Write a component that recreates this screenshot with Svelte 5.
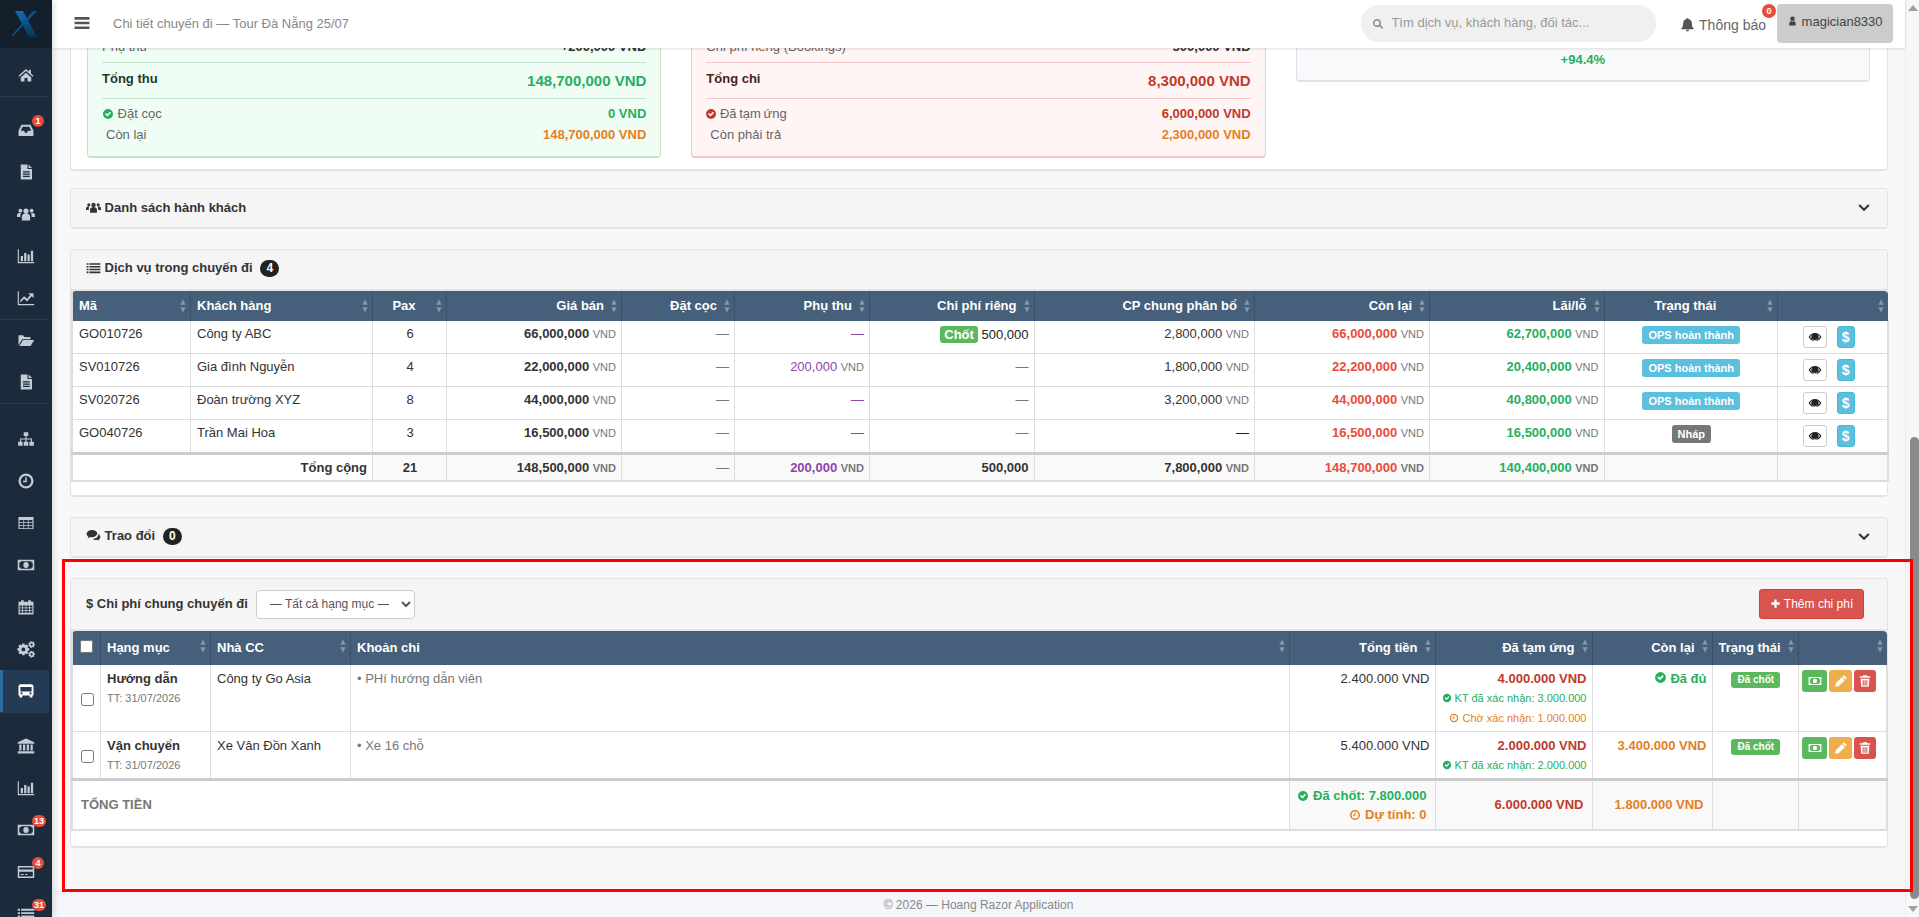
<script>
  function gear(cx, cy, r1, r2, hole, n) {
    let d = "";
    const step = (Math.PI * 2) / n;
    for (let i = 0; i < n; i++) {
      const a = i * step;
      const pts = [
        [r2, a - step * 0.5],
        [r1, a - step * 0.22],
        [r1, a + step * 0.22],
        [r2, a + step * 0.5],
      ];
      for (const [r, t] of pts) {
        d += (d ? "L" : "M") + (cx + r * Math.cos(t)).toFixed(2) + " " + (cy + r * Math.sin(t)).toFixed(2);
      }
    }
    d += `z M${cx - hole} ${cy}a${hole} ${hole} 0 1 0 ${hole * 2} 0a${hole} ${hole} 0 1 0 ${-hole * 2} 0z`;
    return d;
  }

  const grid = (x, y, w, h, cols, rows, gap) => {
    let d = "";
    for (let r = 0; r < rows; r++) {
      for (let c = 0; c < cols; c++) {
        d += `M${x + c * (w + gap)} ${y + r * (h + gap)}h${w}v${h}h${-w}z`;
      }
    }
    return d;
  };

  const icons = {
    home: "M12 4 2 13l1.2 1.4L12 6.6l8.8 7.8L22 13l-3.5-3.1V5h-2.6v2.6z M5 15.2 12 9l7 6.2v5.3h-5V16h-4v4.5H5z",
    inbox: "M6 5h12l4 8v6a1 1 0 0 1-1 1H3a1 1 0 0 1-1-1v-6z M7.5 7.5 5 13h4.5l1 2.5h3l1-2.5H19l-2.5-5.5z",
    file: "M5 2h9v6h6v14H5z M15.5 2 20 6.5h-4.5z M8 11h9v1.5H8z M8 14h9v1.5H8z M8 17h9v1.5H8z",
    users:
      "M8.5 8a3.5 3.5 0 1 0 7 0a3.5 3.5 0 1 0-7 0z M6.5 20.5v-5c0-2.5 2-4 3.5-4h4c1.5 0 3.5 1.5 3.5 4v5z M2 7.5a2.5 2.5 0 1 0 5 0a2.5 2.5 0 1 0-5 0z M17 7.5a2.5 2.5 0 1 0 5 0a2.5 2.5 0 1 0-5 0z M0 16v-2c0-2 1-3.5 3-3.5h2.5c-.8 1-1 2-1 4V16z M24 16v-2c0-2-1-3.5-3-3.5h-2.5c.8 1 1 2 1 4V16z",
    bar: "M1 3h1.5v17H23v1.5H1z M5 12h3v7H5z M9.5 8h3v11h-3z M14 10h3v9h-3z M18.5 5h3v14h-3z",
    line: "M1 3h1.5v17H23v1.5H1z M4.5 18v-3.5l5-5 4 3.5 4-5-2.5-2.5H22v6.5l-2.5-2.5-6 7-4-3.5z",
    folder: "M2 19V5.5h6l2 2.5h8v3H7z M8 12h15l-5 8H3z",
    sitemap:
      "M9 3h6v5h-2.25v3.25H20v4.25h2.5v5.5h-6v-5.5h2v-2.75h-5.75v2.75H15v5.5H9v-5.5h2.25v-2.75H5.5v2.75h2v5.5h-6v-5.5H4v-4.25h7.25V8H9z",
    clock: "M12 2a10 10 0 1 0 0 20a10 10 0 1 0 0-20z M12 5a7 7 0 1 1 0 14a7 7 0 1 1 0-14z M11 7h2v6.5H8v-2h3z",
    table: "M2 4h20v16H2z" + grid(3.5, 8, 5, 3, 3, 3, 1),
    money:
      "M1 5h22v14H1z M5 7a2 2 0 0 1-2 2v6a2 2 0 0 1 2 2h14a2 2 0 0 1 2-2V9a2 2 0 0 1-2-2z M12 8a3.6 4 0 1 0 0 8a3.6 4 0 1 0 0-8z",
    calendar: "M2 5h3.5V3H9v2h6V3h3.5v2H22v17H2z" + grid(3.5, 10, 3.5, 2.5, 4, 3, 1),
    cogs: gear(8.5, 12.5, 8, 6, 2.6, 8) + " " + gear(19.5, 6, 4.5, 3.3, 1.5, 7) + " " + gear(19.5, 19, 4.5, 3.3, 1.5, 7),
    bus: "M5 3h14a3 3 0 0 1 3 3v12h-1.5v2.5h-3.5V18H7v2.5H3.5V18H2V6a3 3 0 0 1 3-3z M4.5 6.5v6h15v-6z M4.5 15a1.5 1.5 0 1 0 3 0a1.5 1.5 0 1 0-3 0z M16.5 15a1.5 1.5 0 1 0 3 0a1.5 1.5 0 1 0-3 0z",
    bank: "M12 2 23 7v2H1V7z M3 10h3v8H3z M8 10h3v8H8z M13 10h3v8h-3z M18 10h3v8h-3z M1 19h22v3H1z",
    card: "M1 4h22v16H1z M3 6h18v2.5H3z M3 11.5h18V18H3z M5 14.5h4V16H5z M11 14.5h3V16h-3z",
    list: "M1 5h3v2.5H1z M5.5 5H23v2.5H5.5z M1 9.5h3V12H1z M5.5 9.5H23V12H5.5z M1 14h3v2.5H1z M5.5 14H23v2.5H5.5z M1 18.5h3V21H1z M5.5 18.5H23V21H5.5z",
    bars: "M2 4h20v3.5H2z M2 10.2h20v3.5H2z M2 16.5h20V20H2z",
    search: "M10 2a8 8 0 1 0 4.9 14.3l5.3 5.3 2.2-2.2-5.3-5.3A8 8 0 0 0 10 2z M10 5a5 5 0 1 1 0 10a5 5 0 1 1 0-10z",
    bell: "M12 1.5a1.5 1.5 0 0 0-1.5 1.6C7 3.8 5 6.5 5 10c0 5-1 6.5-3 8.5v1h20v-1c-2-2-3-3.5-3-8.5 0-3.5-2-6.2-5.5-6.9A1.5 1.5 0 0 0 12 1.5z M9.5 20.5a2.5 2.5 0 0 0 5 0z",
    user: "M12 2a5 5 0 1 0 0 10a5 5 0 1 0 0-10z M5 22v-4c0-3 2-5.5 4-6 1 1 2 1.5 3 1.5s2-.5 3-1.5c2 .5 4 3 4 6v4z",
    check: "M12 2a10 10 0 1 0 0 20a10 10 0 1 0 0-20z M6 12.2l2.2-2.2 2.6 2.6 5-5 2.2 2.2-7.2 7.2z",
    comments:
      "M9.5 3C4.8 3 1 5.8 1 9.2c0 2 1.2 3.7 3 4.8-.3 1-1 1.9-1.5 2.5 1.8-.2 3.4-1 4.5-2 .8.2 1.6.3 2.5.3 4.7 0 8.5-2.8 8.5-6.3S14.2 3 9.5 3z M20 9c.1 5-4 8-9.5 8 1.2 1.3 3.2 2 5.5 2 .7 0 1.3-.1 2-.2.9.8 2 1.3 3.5 1.5-.4-.5-.9-1.1-1.2-2 1.7-.9 2.7-2.3 2.7-3.8 0-2-1.1-3.7-3-5.5z",
    chevron: "M2.5 8 5 5.5l7 7 7-7L21.5 8 12 17.5z",
    eye: "M12 5C7 5 3 8 1 12c2 4 6 7 11 7s9-3 11-7c-2-4-6-7-11-7z M3.5 12c1.2-2 2.8-3.5 4.6-4.4a6 6 0 1 0 7.8 0c1.8.9 3.4 2.4 4.6 4.4-2 3-5 5-8.500 5s-6.500-2-8.500-5z",
    plus: "M9.5 3h5v6.500H21v5h-6.500V21h-5v-6.500H3v-5h6.500z",
    pencil: "M17 2l5 5-2.500 2.500-5-5z M13.500 5.500l5 5L8 21l-6 1 1-6z",
    trash: "M9 2h6l1 2h5v2.500H3V4h5z M4.500 8h15l-1 14h-13z M8 10.500V20h1.800v-9.500z M11.100 10.500V20h1.800v-9.500z M14.200 10.500V20H16v-9.500z",
    sort: "M12 1 20 10H4z M12 23 4 14H20z",
  };

  const navGroups = [
    { pad: 0, items: [{ i: "home" }] },
    {
      pad: 13,
      items: [{ i: "inbox", badge: "1" }, { i: "file" }, { i: "users" }, { i: "bar" }, { i: "line" }],
    },
    { pad: 0, items: [{ i: "folder" }, { i: "file" }] },
    {
      pad: 15,
      items: [
        { i: "sitemap" },
        { i: "clock" },
        { i: "table" },
        { i: "money" },
        { i: "calendar" },
        { i: "cogs" },
        { i: "bus", active: true },
      ],
    },
    {
      pad: 13,
      items: [
        { i: "bank" },
        { i: "bar" },
        { i: "money", badge: "13" },
        { i: "card", badge: "4" },
        { i: "list", badge: "31" },
      ],
    },
  ];

  const services = [
    { ma: "GO010726", kh: "Công ty ABC", pax: 6, gia: "66,000,000", phu: null, rieng: "500,000", chot: true, cp: "2,800,000", con: "66,000,000", lai: "62,700,000", tt: "OPS hoàn thành" },
    { ma: "SV010726", kh: "Gia đình Nguyễn", pax: 4, gia: "22,000,000", phu: "200,000", rieng: null, cp: "1,800,000", con: "22,200,000", lai: "20,400,000", tt: "OPS hoàn thành" },
    { ma: "SV020726", kh: "Đoàn trường XYZ", pax: 8, gia: "44,000,000", phu: null, rieng: null, cp: "3,200,000", con: "44,000,000", lai: "40,800,000", tt: "OPS hoàn thành" },
    { ma: "GO040726", kh: "Trần Mai Hoa", pax: 3, gia: "16,500,000", phu: null, rieng: null, cp: null, con: "16,500,000", lai: "16,500,000", tt: "Nháp" },
  ];

  const serviceCols = [
    ["Mã", "l", 118.5],
    ["Khách hàng", "l", 182],
    ["Pax", "c", 74],
    ["Giá bán", "r", 175],
    ["Đặt cọc", "r", 113],
    ["Phụ thu", "r", 135],
    ["Chi phí riêng", "r", 164.5],
    ["CP chung phân bổ", "r", 220.5],
    ["Còn lại", "r", 175],
    ["Lãi/lỗ", "r", 174.5],
    ["Trạng thái", "c", 173.5],
    ["", "c", 110],
  ];

  const costCols = [
    ["Hạng mục", "l", 110],
    ["Nhà CC", "l", 140],
    ["Khoản chi", "l", 939],
    ["Tổng tiền", "r", 145.5],
    ["Đã tạm ứng", "r", 157],
    ["Còn lại", "r", 120],
    ["Trạng thái", "l", 86.5],
    ["", "c", 88.5],
  ];
</script>

{#snippet icon(name, cls = "")}
  <svg class="ic {cls}" viewBox="0 0 24 24" aria-hidden="true"><path fill-rule="evenodd" d={icons[name]} /></svg>
{/snippet}

{#snippet sortable(col)}
  <th class={col[1]}>
    {col[0]}
    <svg class="sort" viewBox="0 0 24 24" preserveAspectRatio="none" aria-hidden="true"><path d={icons.sort} /></svg>
  </th>
{/snippet}

{#snippet amount(value, cls = "")}
  <span class={cls}>{value}</span> <small>VND</small>
{/snippet}

<div class="shell">
  <aside class="sidebar">
    <div class="logo">
      <svg viewBox="0 0 52 48" width="52" height="48" aria-hidden="true">
        <defs>
          <linearGradient id="xg" x1="0" y1="0" x2="0" y2="1">
            <stop offset="0" stop-color="#0f6fb5" />
            <stop offset="1" stop-color="#0a3350" />
          </linearGradient>
        </defs>
        <polygon points="15,11 23,11 37,37 29,37" fill="url(#xg)" />
        <polygon points="37,11 33,11 12,35 13,36" fill="#0c5488" />
      </svg>
    </div>
    <nav>
      {#each navGroups as group}
        <div class="group" style="padding-top:{group.pad}px">
          {#each group.items as item}
            <div class="nav-item" class:active={item.active}>
              {@render icon(item.i, "nav-ic")}
              {#if item.badge}<span class="nav-badge">{item.badge}</span>{/if}
            </div>
          {/each}
        </div>
      {/each}
    </nav>
  </aside>

  <div class="main">
    <header>
      <span class="burger">{@render icon("bars")}</span>
      <span class="page-title">Chi tiết chuyến đi — Tour Đà Nẵng 25/07</span>
      <label class="search">
        {@render icon("search")}
        <input placeholder="Tìm dịch vụ, khách hàng, đối tác..." />
      </label>
      <span class="notif">
        {@render icon("bell")}
        Thông báo
        <span class="notif-badge">0</span>
      </span>
      <span class="user">{@render icon("user")} magician8330</span>
    </header>

    <div class="viewport">
      <div class="content">
        <section class="panel summary">
          <div class="cards">
            <div class="card green">
              <div class="row clip"><span>Phụ thu</span><b class="dark">+200,000 VND</b></div>
              <div class="row total"><b class="ttl">Tổng thu</b><b class="big g">148,700,000 VND</b></div>
              <div class="row"><span>{@render icon("check", "g")} Đặt cọc</span><b class="g">0 VND</b></div>
              <div class="row"><span class="ind">Còn lại</span><b class="o">148,700,000 VND</b></div>
            </div>
            <div class="card red">
              <div class="row clip"><span>Chi phí riêng (Bookings)</span><b class="dark">500,000 VND</b></div>
              <div class="row total"><b class="ttl">Tổng chi</b><b class="big r">8,300,000 VND</b></div>
              <div class="row"><span class="tight">{@render icon("check", "r")} Đã tạm ứng</span><b class="r">6,000,000 VND</b></div>
              <div class="row"><span class="ind">Còn phải trả</span><b class="o">2,300,000 VND</b></div>
            </div>
            <div class="card grey"><b class="g">+94.4%</b></div>
          </div>
        </section>

        <section class="panel collapsed">
          <div class="head">
            <h3>{@render icon("users")} Danh sách hành khách</h3>
            {@render icon("chevron", "chev")}
          </div>
        </section>

        <section class="panel svc">
          <div class="head">
            <h3>{@render icon("list")} Dịch vụ trong chuyến đi <span class="count">4</span></h3>
          </div>
          <table class="services">
            <colgroup>
              {#each serviceCols as c}<col style="width:{c[2]}px" />{/each}
            </colgroup>
            <thead>
              <tr>
                {#each serviceCols as c}{@render sortable(c)}{/each}
              </tr>
            </thead>
            <tbody>
              {#each services as s}
                <tr>
                  <td>{s.ma}</td>
                  <td>{s.kh}</td>
                  <td class="c">{s.pax}</td>
                  <td class="r">{@render amount(s.gia, "num")}</td>
                  <td class="r"><span class="dash">—</span></td>
                  <td class="r">
                    {#if s.phu}{@render amount(s.phu, "p")}{:else}<span class="p">—</span>{/if}
                  </td>
                  <td class="r">
                    {#if s.rieng}<span class="chot">Chốt</span> <span class="dark-n">{s.rieng}</span>{:else}<span class="dash">—</span>{/if}
                  </td>
                  <td class="r">
                    {#if s.cp}{@render amount(s.cp)}{:else}<span class="dark-n">—</span>{/if}
                  </td>
                  <td class="r">{@render amount(s.con, "rd")}</td>
                  <td class="r">{@render amount(s.lai, "g")}</td>
                  <td class="c">
                    <span class="status" class:draft={s.tt === "Nháp"}>{s.tt}</span>
                  </td>
                  <td class="acts">
                    <div class="act-row">
                      <button class="btn eye">{@render icon("eye")}</button>
                      <button class="btn dollar">$</button>
                    </div>
                  </td>
                </tr>
              {/each}
            </tbody>
            <tfoot>
              <tr>
                <td colspan="2" class="r sum-label"><b>Tổng cộng</b></td>
                <td class="c"><b>21</b></td>
                <td class="r">{@render amount("148,500,000", "num")}</td>
                <td class="r"><span class="dash">—</span></td>
                <td class="r">{@render amount("200,000", "p")}</td>
                <td class="r"><span class="num">500,000</span></td>
                <td class="r">{@render amount("7,800,000", "num")}</td>
                <td class="r">{@render amount("148,700,000", "rd")}</td>
                <td class="r">{@render amount("140,400,000", "g")}</td>
                <td></td>
                <td></td>
              </tr>
            </tfoot>
          </table>
        </section>

        <section class="panel collapsed">
          <div class="head">
            <h3>{@render icon("comments")} Trao đổi <span class="count">0</span></h3>
            {@render icon("chevron", "chev")}
          </div>
        </section>

        <section class="panel costs">
          <div class="head tall">
            <h3>$ Chi phí chung chuyến đi</h3>
            <select>
              <option>— Tất cả hạng mục —</option>
            </select>
            <button class="add">{@render icon("plus")} Thêm chi phí</button>
          </div>
          <table class="cost-table">
            <colgroup>
              <col style="width:28.500px" />
              {#each costCols as c}<col style="width:{c[2]}px" />{/each}
            </colgroup>
            <thead>
              <tr>
                <th class="c chk"><input type="checkbox" /></th>
                {#each costCols as c}{@render sortable(c)}{/each}
              </tr>
            </thead>
            <tbody>
              <tr>
                <td class="c mid"><input type="checkbox" /></td>
                <td><b>Hướng dẫn</b><div class="due">TT: 31/07/2026</div></td>
                <td>Công ty Go Asia</td>
                <td class="muted">• PHí hướng dẫn viên</td>
                <td class="r">2.400.000 VND</td>
                <td class="r">
                  <b class="r2">4.000.000 VND</b>
                  <div class="sub g">{@render icon("check")} KT đã xác nhận: 3.000.000</div>
                  <div class="sub o">{@render icon("clock")} Chờ xác nhận: 1.000.000</div>
                </td>
                <td class="r"><b class="g">{@render icon("check")} Đã đủ</b></td>
                <td class="c"><span class="locked">Đã chốt</span></td>
                <td>
                  <div class="tools">
                    <button class="tool t-g">{@render icon("money")}</button>
                    <button class="tool t-o">{@render icon("pencil")}</button>
                    <button class="tool t-r">{@render icon("trash")}</button>
                  </div>
                </td>
              </tr>
              <tr>
                <td class="c mid"><input type="checkbox" /></td>
                <td><b>Vận chuyển</b><div class="due">TT: 31/07/2026</div></td>
                <td>Xe Vân Đồn Xanh</td>
                <td class="muted">• Xe 16 chỗ</td>
                <td class="r">5.400.000 VND</td>
                <td class="r">
                  <b class="r2">2.000.000 VND</b>
                  <div class="sub g">{@render icon("check")} KT đã xác nhận: 2.000.000</div>
                </td>
                <td class="r"><b class="o">3.400.000 VND</b></td>
                <td class="c"><span class="locked">Đã chốt</span></td>
                <td>
                  <div class="tools">
                    <button class="tool t-g">{@render icon("money")}</button>
                    <button class="tool t-o">{@render icon("pencil")}</button>
                    <button class="tool t-r">{@render icon("trash")}</button>
                  </div>
                </td>
              </tr>
            </tbody>
            <tfoot>
              <tr>
                <td colspan="4" class="grand">TỔNG TIỀN</td>
                <td class="r stack">
                  <div class="g">{@render icon("check")} Đã chốt: 7.800.000</div>
                  <div class="o">{@render icon("clock")} Dự tính: 0</div>
                </td>
                <td class="r mid tot"><b class="r2">6.000.000 VND</b></td>
                <td class="r mid tot"><b class="o">1.800.000 VND</b></td>
                <td></td>
                <td></td>
              </tr>
            </tfoot>
          </table>
        </section>
      </div>
      <footer>© 2026 — Hoang Razor Application</footer>
    </div>
  </div>

  <div class="scrollbar">
    <span class="arrow up"></span>
    <div class="track"><div class="thumb"></div></div>
    <span class="arrow down"></span>
  </div>

  <div class="annotation"></div>
</div>

<style>
  :global(body) {
    margin: 0;
    font-family: "Liberation Sans", Arial, sans-serif;
    font-size: 13px;
    color: #333;
    overflow: hidden;
  }
  .shell {
    position: relative;
    display: flex;
    width: 1919px;
    height: 917px;
    overflow: hidden;
    background: #f4f6f9;
  }
  .ic {
    width: 1em;
    height: 1em;
    fill: currentColor;
    vertical-align: -1px;
  }

  /* sidebar */
  .sidebar {
    flex: 0 0 52px;
    background: #1c2b3c;
    z-index: 3;
    overflow: hidden;
    box-shadow: 2px 0 6px rgba(0, 0, 0, 0.12);
  }
  .logo {
    height: 48px;
    background: #141f2c;
  }
  .logo svg {
    display: block;
  }
  nav {
    width: 49px;
    padding-top: 6px;
  }
  .group {
    border-bottom: 1px solid #2a3b4e;
    margin-bottom: -1px;
  }
  .group:last-child {
    border-bottom: 0;
  }
  .nav-item {
    position: relative;
    height: 42px;
    display: flex;
    align-items: center;
    justify-content: center;
    color: #c3cbd3;
    box-sizing: border-box;
    padding-left: 3px;
  }
  .nav-item.active {
    background: #243b55;
    border-left: 3px solid #2e6da4;
    padding-left: 0;
    color: #fff;
  }
  .nav-ic {
    width: 18px;
    height: 18px;
  }
  .nav-badge {
    position: absolute;
    top: 6px;
    left: 32px;
    min-width: 12px;
    height: 12px;
    padding: 0 2px;
    box-sizing: border-box;
    border-radius: 6px;
    background: #e74c3c;
    color: #fff;
    font-size: 9px;
    font-weight: 700;
    line-height: 12px;
    text-align: center;
  }

  /* header */
  .main {
    flex: 0 0 1853px;
    display: flex;
    flex-direction: column;
    min-width: 0;
  }
  header {
    flex: 0 0 48px;
    display: flex;
    align-items: center;
    background: #fff;
    box-shadow: 0 1px 3px rgba(0, 0, 0, 0.12);
    z-index: 2;
    padding-right: 12px;
  }
  .burger {
    margin-left: 21px;
    font-size: 18px;
    color: #555;
    line-height: 1;
  }
  .page-title {
    margin-left: 22px;
    color: #888;
    flex: 1;
    margin-top: -2px;
  }
  .search {
    width: 295px;
    height: 37px;
    margin-top: -1px;
    border-radius: 18px;
    background: #f0f0f0;
    display: flex;
    align-items: center;
    gap: 7px;
    padding-left: 11px;
    box-sizing: border-box;
    color: #888;
    font-size: 12px;
  }
  .search input {
    flex: 1;
    min-width: 0;
    border: 0;
    outline: 0;
    background: transparent;
    font: 13px "Liberation Sans", Arial, sans-serif;
    padding: 0 0 2px;
  }
  .search input::placeholder {
    color: #999;
  }
  .notif {
    position: relative;
    margin-left: 24px;
    margin-right: 11px;
    font-size: 14px;
    color: #666;
    white-space: nowrap;
  }
  .notif .ic {
    width: 15px;
    height: 17px;
    vertical-align: -3px;
    color: #555;
  }
  .notif-badge {
    position: absolute;
    top: -12px;
    right: -10px;
    width: 14px;
    height: 14px;
    border-radius: 50%;
    background: #e74c3c;
    color: #fff;
    font-size: 9px;
    font-weight: 700;
    line-height: 14px;
    text-align: center;
  }
  .user {
    width: 116px;
    height: 39px;
    margin-top: -1px;
    border-radius: 4px;
    background: #ccc;
    color: #444;
    line-height: 36px;
    padding-left: 10px;
    box-sizing: border-box;
    white-space: nowrap;
  }
  .user .ic {
    width: 11px;
    height: 12px;
    vertical-align: -1px;
  }

  /* content */
  .viewport {
    flex: 1;
    display: flex;
    flex-direction: column;
    overflow: hidden;
    background: #f4f6f9;
  }
  .content {
    height: 843px;
    flex: none;
    padding: 0 17px 0 18px;
    background: #f8f8f8;
    display: flex;
    flex-direction: column;
    gap: 20px;
  }
  .panel {
    flex: none;
    background: #fff;
    border: 1px solid #e3e3e3;
    border-bottom-width: 2px;
    border-radius: 4px;
    padding-bottom: 14px;
  }
  .panel.svc {
    padding-bottom: 13px;
  }
  .panel.costs {
    padding-bottom: 15px;
  }
  .panel.collapsed {
    padding-bottom: 0;
    border-bottom-width: 0;
  }
  .head {
    height: 39px;
    display: flex;
    align-items: center;
    padding: 0 15px;
    background: #f5f5f5;
    border-bottom: 2px solid #e4e4e4;
    border-radius: 4px 4px 0 0;
  }
  .collapsed .head {
    height: 38px;
  }
  .head.tall {
    height: 50px;
  }
  h3 {
    margin: -2px 0 0;
    font-size: 13px;
    font-weight: 700;
    color: #333;
    flex: 1;
  }
  .head h3 .ic {
    width: 15px;
    height: 15px;
    vertical-align: -3px;
  }
  .costs h3 {
    flex: none;
  }
  .count {
    display: inline-block;
    min-width: 7px;
    margin-left: 4px;
    padding: 1px 6px;
    border-radius: 10px;
    background: #222;
    color: #fff;
    font-size: 12px;
    line-height: 15px;
    text-align: center;
  }
  .chev {
    width: 14px;
    height: 14px;
    margin-right: 1px;
    color: #333;
  }
  select {
    margin-left: 8px;
    width: 159px;
    height: 29px;
    border: 1px solid #ccc;
    border-radius: 4px;
    background: #fff;
    color: #555;
    font: 12px "Liberation Sans", Arial, sans-serif;
    padding: 0 9px;
  }
  .add {
    margin-left: auto;
    margin-right: 8px;
    width: 105px;
    height: 30px;
    border: 1px solid #d43f3a;
    border-radius: 3px;
    background: #d9534f;
    color: #fff;
    font: 12px "Liberation Sans", Arial, sans-serif;
    padding: 0;
    white-space: nowrap;
  }
  .add .ic {
    width: 11px;
    height: 11px;
  }

  /* summary cards */
  .summary {
    margin-top: -26px;
    margin-bottom: -3px;
    padding: 0 17px 11px 16px;
  }
  .cards {
    display: grid;
    grid-template-columns: repeat(3, 1fr);
    gap: 30px;
    align-items: start;
  }
  .card {
    border: 1px solid;
    border-bottom-width: 2px;
    border-radius: 4px;
    padding: 0 14px 11px 14px;
  }
  .green {
    background: #f0fdf4;
    border-color: #c3e6cb;
  }
  .red {
    background: #fff5f5;
    border-color: #f5c6cb;
  }
  .grey {
    background: #f8f9fa;
    border-color: #dee2e6;
    padding: 28px 0 12px;
    text-align: center;
    line-height: 16px;
    font-size: 13px;
  }
  .row {
    display: flex;
    justify-content: space-between;
    height: 21px;
    align-items: center;
    color: #666;
    font-size: 13px;
  }
  .row b {
    font-size: 13px;
  }
  .row.clip {
    height: 39px;
    padding-top: 6px;
    box-sizing: border-box;
    border-bottom: 1px solid #c3e6cb;
  }
  .red .row.clip,
  .red .row.total {
    border-color: #f5c6cb;
  }
  .row.total {
    height: 35px;
    border-bottom: 1px solid #c3e6cb;
    margin-bottom: 4px;
    padding-bottom: 0;
  }
  .row .ind {
    padding-left: 4px;
  }
  .row .tight {
    word-spacing: -1px;
    margin-left: -1px;
  }
  .row .ic {
    width: 12px;
    height: 12px;
    vertical-align: -2px;
  }
  .row b.ttl {
    color: #1c3a27;
    font-size: 13px;
    margin-top: -4px;
  }
  .red .row b.ttl {
    color: #4a2020;
  }
  .row b.big {
    font-size: 15px;
    margin-top: 0;
  }
  .dark {
    color: #333;
  }
  .g {
    color: #27ae60;
  }
  .o {
    color: #e67e22;
  }
  .r2 {
    color: #c0392b;
  }
  b.r,
  .ic.r,
  .big.r {
    color: #c0392b;
  }
  .rd {
    color: #e74c3c;
  }
  .p {
    color: #8e44ad;
  }

  /* tables */
  table {
    width: 1816px;
    table-layout: fixed;
    border-collapse: collapse;
    border-left: 2px solid #ddd;
  }
  thead th {
    position: relative;
    background: #46607b;
    color: #fff;
    font-size: 13px;
    font-weight: 700;
    line-height: 20px;
    padding: 5px 17px 5px 6px;
    border-right: 1px solid #3a5169;
    white-space: nowrap;
    text-align: left;
  }
  thead th:last-child {
    border-right: 0;
    border-top-right-radius: 4px;
  }
  thead th:first-child {
    border-top-left-radius: 4px;
  }
  th.r {
    text-align: right;
  }
  th.c {
    text-align: center;
  }
  .sort {
    position: absolute;
    right: 3px;
    top: 50%;
    margin-top: -7px;
    width: 8px;
    height: 14px;
    fill: #8597aa;
  }
  td {
    padding: 5px 5px 5px 6px;
    line-height: 16px;
    vertical-align: top;
    border-right: 1px solid #ddd;
    border-bottom: 1px solid #ddd;
    color: #333;
    white-space: nowrap;
  }
  td:last-child {
    border-right: 2px solid #ddd;
  }
  td.r {
    text-align: right;
  }
  td.c {
    text-align: center;
  }
  td.mid {
    vertical-align: middle;
  }
  td.muted {
    color: #777;
  }
  small {
    font-size: 11px;
    color: #777;
  }
  .num {
    font-weight: 700;
    color: #333;
  }
  .services td .rd,
  .services td .g {
    font-weight: 700;
  }
  .dash {
    color: #777;
  }
  .dark-n {
    color: #222;
  }
  .chot {
    display: inline-block;
    padding: 0 4px;
    border-radius: 3px;
    background: #5cb85c;
    color: #fff;
    font-weight: 700;
    line-height: 17px;
  }
  .status {
    display: inline-block;
    padding: 1px 6px;
    border-radius: 3px;
    background: #5bc0de;
    color: #fff;
    font-size: 11px;
    font-weight: 700;
    line-height: 16px;
  }
  .status.draft {
    background: #777;
  }
  .act-row {
    display: flex;
    justify-content: center;
    gap: 10px;
    padding-right: 8px;
  }
  .btn {
    height: 22px;
    padding: 0;
    border-radius: 3px;
    border: 1px solid #ccc;
    background: #fff;
    font-size: 14px;
    line-height: 20px;
    display: flex;
    align-items: center;
    justify-content: center;
  }
  .btn.eye {
    width: 24px;
    color: #222;
  }
  .btn.eye .ic {
    width: 14px;
    height: 14px;
  }
  .btn.dollar {
    width: 18px;
    background: #5bc0de;
    border-color: #46b8da;
    color: #fff;
    font: 700 14px "Liberation Sans", Arial, sans-serif;
  }
  tfoot td {
    background: #f9f9f9;
    border-top: 3px solid #ccc;
    border-bottom: 2px solid #ddd;
    padding-top: 5px;
    padding-bottom: 5px;
    font-weight: 400;
  }
  .services tfoot td {
    padding-bottom: 4px;
  }
  .services .sum-label {
    background: #fff;
  }
  .services tfoot small {
    font-weight: 700;
  }
  .services tfoot .p {
    font-weight: 700;
  }

  /* costs table */
  .cost-table thead th {
    padding-top: 7px;
    padding-bottom: 7px;
  }
  .cost-table .sort {
    margin-top: -9px;
  }
  .cost-table tbody td {
    padding-top: 6px;
    padding-bottom: 4px;
  }
  th.chk {
    padding: 0;
    line-height: 0;
  }
  input[type="checkbox"] {
    width: 13px;
    height: 13px;
    margin: 0;
    vertical-align: middle;
  }
  th.chk input {
    position: relative;
    top: -2px;
  }
  .due {
    margin-top: 3px;
    font-size: 11px;
    color: #777;
  }
  .sub {
    margin-top: 2px;
    font-size: 11px;
    line-height: 18px;
  }
  .sub .ic {
    width: 10px;
    height: 10px;
  }
  .locked {
    display: inline-block;
    margin-top: 1px;
    padding: 0 6px;
    border-radius: 3px;
    background: #5cb85c;
    color: #fff;
    font-size: 10px;
    font-weight: 700;
    line-height: 16px;
  }
  .tools {
    display: flex;
    gap: 2px;
    margin-left: -3px;
    margin-top: -1px;
  }
  .tool {
    height: 22px;
    border: 0;
    padding: 0;
    border-radius: 3px;
    color: #fff;
    display: flex;
    align-items: center;
    justify-content: center;
  }
  .tool .ic {
    width: 14px;
    height: 14px;
  }
  .t-g {
    width: 25px;
    background: #5cb85c;
  }
  .t-o {
    width: 23px;
    background: #f0ad4e;
  }
  .t-r {
    width: 22px;
    background: #d9534f;
  }
  .grand {
    vertical-align: middle;
    background: #fff;
    padding-left: 8px;
    font-weight: 700;
    color: #777;
  }
  .stack {
    line-height: 19px;
    font-weight: 700;
    padding: 5px 8px 5px 0;
  }
  .stack .ic {
    width: 12px;
    height: 12px;
    vertical-align: -2px;
  }
  td.tot {
    padding-right: 8px;
  }

  /* footer */
  footer {
    flex: 1;
    display: flex;
    align-items: center;
    justify-content: center;
    font-size: 12px;
    color: #888;
    border-top: 1px solid #eee;
    padding-top: 1px;
  }

  /* page scrollbar */
  .scrollbar {
    flex: 0 0 14px;
    display: flex;
    flex-direction: column;
    align-items: center;
    background: #f7f7f7;
    border-left: 1px solid #ececec;
  }
  .arrow {
    flex: none;
    width: 0;
    height: 0;
    margin: 5px 0;
    border-left: 5px solid transparent;
    border-right: 5px solid transparent;
  }
  .arrow.up {
    border-bottom: 6px solid #a0a0a0;
  }
  .arrow.down {
    border-top: 6px solid #a0a0a0;
  }
  .track {
    flex: 1;
    width: 100%;
    padding-top: 421px;
    box-sizing: border-box;
  }
  .thumb {
    width: 9px;
    height: 462px;
    margin-left: 4px;
    border-radius: 5px;
    background: #8a8a8a;
  }

  /* red mark drawn over the screenshot */
  .annotation {
    position: absolute;
    left: 62px;
    top: 559px;
    width: 1845px;
    height: 327px;
    border: 3px solid #f00;
    pointer-events: none;
    z-index: 5;
  }
</style>
